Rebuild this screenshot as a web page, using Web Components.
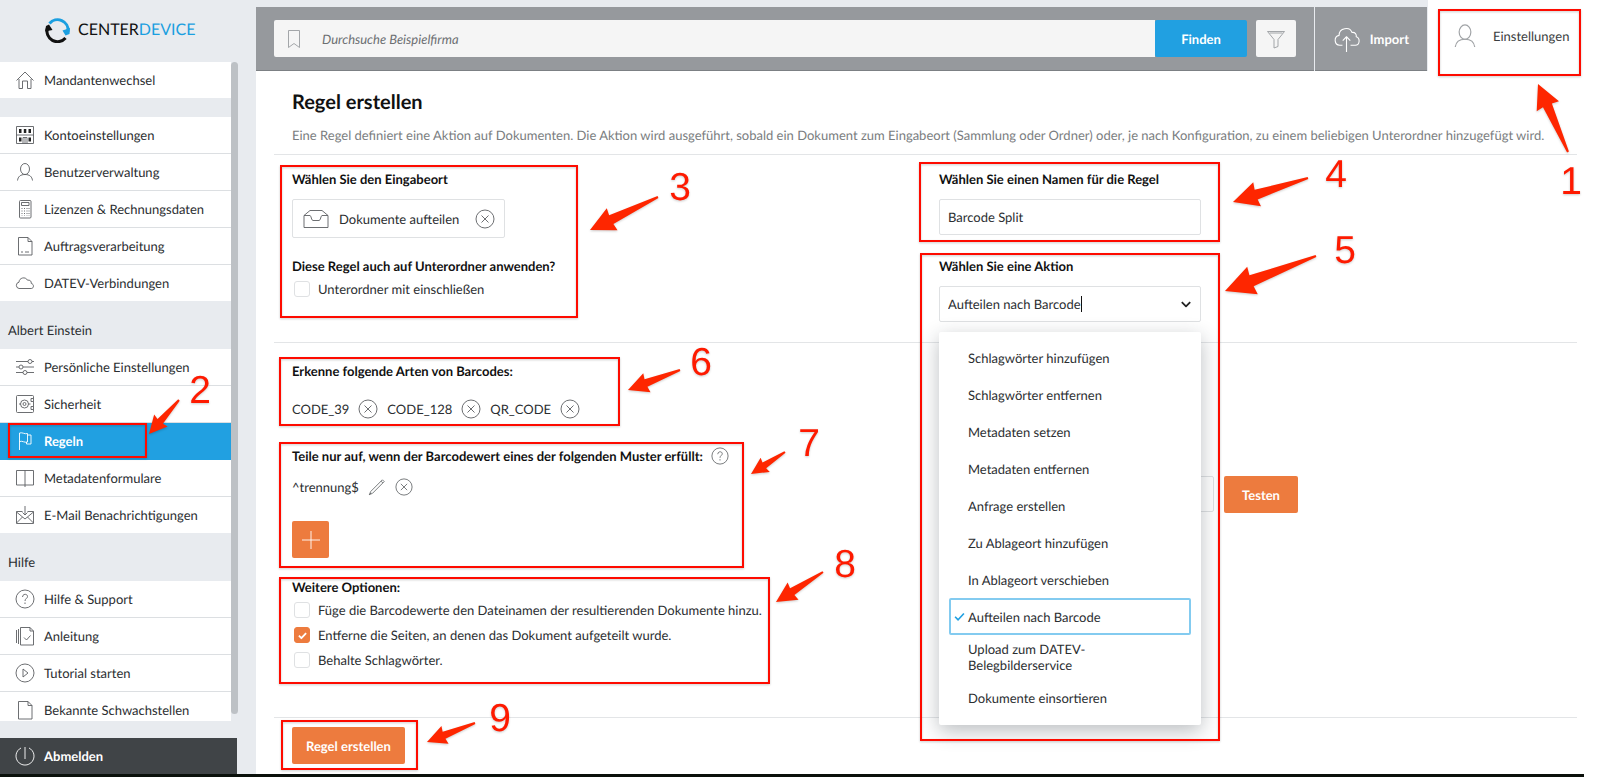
<!DOCTYPE html>
<html lang="de">
<head>
<meta charset="utf-8">
<title>CenterDevice - Regel erstellen</title>
<style>
  body {
    margin: 0;
    background: #fff;
    color: #2b2e31;
    font: 13px/20px Lato, "Liberation Sans", sans-serif;
    text-rendering: geometricPrecision;
  }
</style>
</head>
<body>
<cd-app></cd-app>

<script>
// small helper, every element below renders once into its shadow root
function render(host, html) {
  host.attachShadow({ mode: 'open' }).innerHTML = html;
}

const ICONS = {
  home: '<path d="M1.500 10.500 10 2l8.500 8.500M4 9v9.500h3.500V11h5v7.500H16V9"/>',
  building: '<path d="M1.500 1.500h17v17h-17zM1.500 10h17M8 18.500V12.500h4v6M10 12.500v6"/><path d="M4 4h2.500v4H4zM8.800 4h2.500v4H8.800zM13.500 4H16v4h-2.500zM4 12.500h2.500v4H4zM13.500 12.500H16v4h-2.500z" fill="#222" stroke="none"/>',
  user: '<ellipse cx="10" cy="7" rx="4.500" ry="5.500"/><path d="M2.500 18.500c.5-4 3-6 7.500-6s7 2 7.500 6"/>',
  calculator: '<rect x="4.500" y="1.500" width="11.500" height="17.500" rx="1"/><path d="M6.500 3.500H14v3H6.500z"/><path d="M7 9v8M9.500 9v8M12 9v8M14 9v8" stroke-dasharray="1 1.500"/>',
  contract: '<path d="M3.500 1.500H13l4 4v13.500H3.500zM13 1.500v4h4M6 16h2M10 16h4"/>',
  cloud: '<path d="M4 15.500a3.200 3.200 0 0 1 0-6.300c0-4.500 6.500-6 8.500-2 2.500-.5 4 1 3.800 3.300 3 .5 2.700 5 0 5z"/>',
  sliders: '<path d="M1 4.500h12M17 4.500h2M1 10h3M8 10h11M1 15.500h7M12 15.500h7"/><circle cx="15" cy="4.500" r="2"/><circle cx="6" cy="10" r="2"/><circle cx="10" cy="15.500" r="2"/>',
  safe: '<rect x="1.500" y="1.500" width="17" height="17" rx="1"/><circle cx="9.500" cy="10" r="4"/><circle cx="9.500" cy="10" r="1.500"/><path d="M4 10h1.500M13.500 10h2M18 4.500h-2v3h2M18 12.500h-2v3h2"/>',
  flag: '<path d="M4.500 19V2c3-1 5 1.500 8 .5v8.500c-3 1-5-1.500-8-.5M12.500 4H16v9h-4.500v-2"/>',
  book: '<path d="M1.500 2.500h17v14.500h-17zM10 2.500V19"/>',
  mail: '<path d="M7.500 6.500h-6v12h17v-12h-6M1.500 7l8.500 7 8.500-7M1.500 18l6-6M18.500 18l-6-6M10 1v9M7.500 7.500l2.500 2.500 2.500-2.500"/>',
  help: '<circle cx="10" cy="10" r="9"/><path d="M7.500 8c0-3.500 5-3.500 5-.5 0 2-2.500 2-2.500 4.500M10 13.500v1.500"/>',
  manual: '<path d="M5.500 1.500H15l3.500 3.500v14h-13zM15 1.500V5h3.500M3.500 3v15M1.500 4v13M9 11.500l2.500 2.500 4-4.500"/>',
  play: '<circle cx="10" cy="10" r="9"/><path d="M8 6l5 4-5 4z"/>',
  file: '<path d="M3.500 1.500H13l4 4v13.500H3.500zM13 1.500v4h4"/>',
  power: '<path d="M6 2a9 9 0 1 0 8 0M10 1v12"/>',
  close: '<circle cx="10" cy="10" r="9"/><path d="M6.500 6.500l7 7M13.500 6.500l-7 7"/>',
  pencil: '<path d="M1.500 18.500l1.500-3.500L16 2l2 2L5 17zM14.500 3.500l2 2M1.500 18.500l2-2"/>',
  inbox: '<path d="M-2 6.500 4 1.500h12l6 5V18.500H-2zM-2 6.500h6c1.500 0 1 5 3 5h6c2 0 1.500-5 3-5h6"/>',
  bookmark: '<path d="M4.500 1.500h11v17L10 14.500l-5.500 4z"/>',
  filter: '<path d="M1.500 2.500h17l-6.500 8v7l-4 1.500v-8.500zM3.500 4h13"/>',
  upload: '<path d="M7 15H5a3.700 3.700 0 0 1-.5-7.300C4.500 2 12.500 1 14 5.500c2.500-.3 3.600 1.500 3.200 3.200 3.200 1 2.700 6.300-.7 6.300H13M10 20V9M7.200 11.500 10 8.700l2.800 2.800"/>',
  plus: '<path d="M10 1v18M1 10h18"/>',
  chevron: '<path d="M3 7l7 7 7-7"/>',
  check: '<path d="M2 10.500l5.500 5.500L18 4.500"/>'
};

class CdIcon extends HTMLElement {
  connectedCallback() {
    render(this, `
      <style>
        :host { display: inline-flex; flex: none; width: 20px; height: 20px; color: #5c5f62; }
        svg {
          width: 100%; height: 100%; overflow: visible;
          fill: none; stroke: currentColor; stroke-width: var(--stroke, .9); stroke-linejoin: round;
        }
      </style>
      <svg viewBox="0 0 20 20" aria-hidden="true">${ICONS[this.getAttribute('name')]}</svg>
    `);
  }
}

class CdButton extends HTMLElement {
  connectedCallback() {
    render(this, `
      <style>
        :host { display: inline-flex; }
        button {
          min-width: 37px; height: 37px; padding: 0 var(--pad, 14px);
          display: flex; align-items: center; justify-content: center;
          border: 0; border-radius: 2px;
          background: var(--button-color, #ed7b3e); color: #fff;
          font: bold 13px/20px Lato, sans-serif; text-rendering: inherit;
        }
      </style>
      <button type="button" aria-label="${this.getAttribute('label') || this.textContent}"><slot></slot></button>
    `);
  }
}

// round x, also used for edit and help
class CdIconButton extends HTMLElement {
  connectedCallback() {
    render(this, `
      <style>
        :host { display: inline-flex; align-items: center; }
        button { display: flex; padding: 0; border: 0; background: none; }
        cd-icon { width: var(--size, 20px); height: var(--size, 20px); }
      </style>
      <button type="button" aria-label="${this.getAttribute('label')}">
        <cd-icon name="${this.getAttribute('icon')}"></cd-icon>
      </button>
    `);
  }
}

class CdCheckbox extends HTMLElement {
  connectedCallback() {
    render(this, `
      <style>
        :host { display: block; }
        label { display: flex; align-items: center; gap: 8px; padding-left: 2px; }
        input {
          appearance: none; box-sizing: border-box; width: 16px; height: 16px; margin: 0;
          border: 1px solid #dfe1e3; border-radius: 3px; background: #fff;
        }
        .box { display: grid; }
        .box > * { grid-area: 1 / 1; place-self: center; }
        cd-icon { width: 9px; height: 9px; color: #fff; --stroke: 4; visibility: hidden; }
        input:checked { background: #ed7b3e; border-color: #ed7b3e; }
        input:checked + cd-icon { visibility: visible; }
      </style>
      <label>
        <span class="box">
          <input type="checkbox" ${this.hasAttribute('checked') ? 'checked' : ''}>
          <cd-icon name="check"></cd-icon>
        </span>
        <slot></slot>
      </label>
    `);
  }
}

class CdLogo extends HTMLElement {
  connectedCallback() {
    render(this, `
      <style>
        :host { display: flex; align-items: center; gap: 8px; font-size: 16px; color: #111; }
        svg { width: 25px; height: 26px; fill: none; stroke-width: 3; }
        b { font-weight: normal; color: #1b9fe0; }
      </style>
      <svg viewBox="0 0 25 26" aria-hidden="true">
        <path d="M4.500 6.500a10.500 10.500 0 0 1 18.500 8" stroke="#1b9fe0"/>
        <path d="M17.500 13.500 25 11l-.5 6-4 1.500z" fill="#1b9fe0"/>
        <path d="M2.500 11a10.500 10.500 0 0 0 18 10" stroke="#111"/>
        <path d="M0 14.500 1 9l3-1.500L7.500 13z" fill="#111"/>
      </svg>
      <span>CENTER<b>DEVICE</b></span>
    `);
  }
}

class CdNavItem extends HTMLElement {
  connectedCallback() {
    render(this, `
      <style>
        :host { display: block; flex: none; background: #fff; border-bottom: 1px solid #dcdfe2; }
        :host(:last-of-type) { border-bottom: 0; }
        :host([active]) { background: #21a0e1; border-color: #21a0e1; font-weight: bold; }
        :host([dark]) { background: #404447; font-weight: bold; }
        a {
          display: flex; align-items: center; gap: 9px; height: 36px; padding-left: 15px;
          color: #2b2e31; text-decoration: none; white-space: nowrap;
        }
        :host([active]) a, :host([dark]) a, :host([active]) cd-icon, :host([dark]) cd-icon { color: #fff; }
      </style>
      <a href="#"><cd-icon name="${this.getAttribute('icon')}"></cd-icon><slot></slot></a>
    `);
  }
}

class CdSidebar extends HTMLElement {
  connectedCallback() {
    render(this, `
      <style>
        :host {
          display: flex; flex-direction: column; flex: none; box-sizing: border-box;
          width: 256px; background: #e8ebef;
        }
        cd-logo { height: 26px; padding: 17px 0 19px 45px; }
        .scroll { display: flex; flex: 1; min-height: 0; width: 238px; }
        nav { flex: 1; overflow: hidden; }
        .group { margin-bottom: 19px; }
        .bar { width: 7px; margin-bottom: 7px; border-radius: 4px; background: #bdc1c5; }
        h2 { margin: -19px 0 0; padding: 19px 0 9px 8px; font-size: 13px; font-weight: normal; line-height: 20px; }
        .logout { width: 237px; margin-top: 17px; }
      </style>
      <cd-logo></cd-logo>
      <div class="scroll">
        <nav>
          <div class="group">
            <cd-nav-item icon="home">Mandantenwechsel</cd-nav-item>
          </div>
          <div class="group">
            <cd-nav-item icon="building">Kontoeinstellungen</cd-nav-item>
            <cd-nav-item icon="user">Benutzerverwaltung</cd-nav-item>
            <cd-nav-item icon="calculator">Lizenzen &amp; Rechnungsdaten</cd-nav-item>
            <cd-nav-item icon="contract">Auftragsverarbeitung</cd-nav-item>
            <cd-nav-item icon="cloud">DATEV-Verbindungen</cd-nav-item>
          </div>
          <h2>Albert Einstein</h2>
          <div class="group">
            <cd-nav-item icon="sliders">Persönliche Einstellungen</cd-nav-item>
            <cd-nav-item icon="safe">Sicherheit</cd-nav-item>
            <cd-nav-item icon="flag" active>Regeln</cd-nav-item>
            <cd-nav-item icon="book">Metadatenformulare</cd-nav-item>
            <cd-nav-item icon="mail">E-Mail Benachrichtigungen</cd-nav-item>
          </div>
          <h2>Hilfe</h2>
          <div class="group">
            <cd-nav-item icon="help">Hilfe &amp; Support</cd-nav-item>
            <cd-nav-item icon="manual">Anleitung</cd-nav-item>
            <cd-nav-item icon="play">Tutorial starten</cd-nav-item>
            <cd-nav-item icon="file">Bekannte Schwachstellen</cd-nav-item>
          </div>
        </nav>
        <div class="bar"></div>
      </div>
      <cd-nav-item class="logout" icon="power" dark>Abmelden</cd-nav-item>
    `);
  }
}

class CdTopbar extends HTMLElement {
  connectedCallback() {
    render(this, `
      <style>
        :host { display: flex; }
        .bar { display: flex; flex: 1; gap: 1px; padding-top: 7px; background: #e8ebef; }
        .search, .import { display: flex; align-items: center; height: 63px; background: #96999d; border-bottom: 1px solid #7c8084; }
        .search { flex: 1; padding: 0 18px; }
        .field {
          display: flex; align-items: center; flex: 1; gap: 18px; height: 37px; padding-left: 10px;
          background: #f5f5f5; border-radius: 2px 0 0 2px;
        }
        .field cd-icon { color: #9a9da0; }
        input {
          flex: 1; border: 0; padding: 0; background: none; outline: 0;
          font: italic 13px/20px Lato, sans-serif; text-rendering: inherit;
        }
        input::placeholder { color: #6c6f72; opacity: 1; }
        cd-button { --button-color: #21a0e1; --pad: 26px; }
        .filter {
          display: flex; align-items: center; justify-content: center; width: 40px; height: 37px; margin-left: 9px;
          padding: 0; border: 0; border-radius: 2px; background: #f5f5f5;
        }
        .filter cd-icon { color: #9a9da0; }
        .import {
          box-sizing: content-box; gap: 10px; padding: 0 18px; margin-right: 1px;
          color: #fff; font-weight: bold; text-decoration: none;
        }
        .import cd-icon { width: 27px; height: 27px; color: #fff; --stroke: .8; }
        .user {
          display: flex; align-items: center; gap: 15px; width: 148px; height: 71px; padding-left: 24px;
          color: #3a3d40; text-decoration: none;
        }
        .user cd-icon { width: 26px; height: 26px; color: #a0a3a6; }
      </style>
      <div class="bar">
        <div class="search">
          <div class="field">
            <cd-icon name="bookmark"></cd-icon>
            <input type="text" aria-label="Suche" placeholder="Durchsuche Beispielfirma">
          </div>
          <cd-button>Finden</cd-button>
          <button class="filter" type="button" aria-label="Filter"><cd-icon name="filter"></cd-icon></button>
        </div>
        <a class="import" href="#"><cd-icon name="upload"></cd-icon>Import</a>
      </div>
      <a class="user" href="#"><cd-icon name="user"></cd-icon>Einstellungen</a>
    `);
  }
}

class CdActionSelect extends HTMLElement {
  connectedCallback() {
    const actions = [
      'Schlagwörter hinzufügen', 'Schlagwörter entfernen', 'Metadaten setzen', 'Metadaten entfernen',
      'Anfrage erstellen', 'Zu Ablageort hinzufügen', 'In Ablageort verschieben', 'Aufteilen nach Barcode',
      'Upload zum DATEV-Belegbilderservice', 'Dokumente einsortieren'
    ];
    const selected = 'Aufteilen nach Barcode';

    render(this, `
      <style>
        :host { display: block; }
        label { display: block; margin-bottom: 10px; font-weight: bold; color: #111; }
        .combo {
          position: relative; box-sizing: border-box; display: flex; align-items: center; width: 262px; height: 36px;
          padding: 0 8px; border: 1px solid #dfe1e3; border-radius: 2px;
        }
        input {
          field-sizing: content; border: 0; padding: 0; background: none; outline: 0;
          color: inherit; font: inherit; text-rendering: inherit;
        }
        .caret { width: 1px; height: 16px; background: #111; }
        .combo > cd-icon { width: 12px; height: 12px; margin-left: auto; color: #222; --stroke: 3; }
        ul {
          position: absolute; z-index: 2; top: 45px; left: -1px; right: -1px; margin: 0; padding: 7px 10px 9px; list-style: none;
          background: #fff; border-radius: 2px; box-shadow: 0 6px 20px rgba(30, 40, 50, .3);
        }
        li {
          box-sizing: border-box; display: flex; align-items: center; min-height: 37px; padding: 6px 50px 6px 19px;
          line-height: 16px;
        }
        li[aria-selected=true] { padding-left: 3px; padding-right: 0; gap: 3px; border: 2px solid #83cbf0; border-radius: 2px; }
        li cd-icon { width: 11px; height: 11px; color: #21a0e1; --stroke: 3; }
      </style>
      <label for="action">Wählen Sie eine Aktion</label>
      <div class="combo">
        <input id="action" type="text" role="combobox" aria-expanded="true" aria-controls="list" value="${selected}">
        <span class="caret"></span>
        <cd-icon name="chevron"></cd-icon>
        <ul id="list" role="listbox">
          ${actions.map(a => a === selected
            ? `<li role="option" aria-selected="true"><cd-icon name="check"></cd-icon>${a}</li>`
            : `<li role="option">${a}</li>`).join('')}
        </ul>
      </div>
    `);
  }
}

class CdRuleForm extends HTMLElement {
  connectedCallback() {
    render(this, `
      <style>
        :host { display: flex; flex-direction: column; flex: 1; }
        h1 { margin: 0 0 11px; font-size: 20px; line-height: 24px; color: #111; }
        h3, .name label { display: block; margin: 0; font-size: 13px; line-height: 20px; font-weight: bold; color: #111; }
        .intro { padding: 19px 36px 9px; color: #7a7d80; }
        .intro p { margin: 0; }
        section { display: grid; grid-template-columns: 1fr 1fr; padding: 14px 14px 20px 36px; }
        section.options { padding: 18px 14px 47px 36px; }
        hr { width: auto; margin: 0 23px 0 18px; border: 0; border-top: 1px solid #e3e5e7; }
        .source {
          box-sizing: border-box; display: flex; align-items: center; width: 213px; height: 39px; margin: 10px 0 18px;
          padding: 0 9px 0 10px; border: 1px solid #dfe1e3; border-radius: 2px;
        }
        .source cd-icon { width: 26px; margin-right: 10px; }
        .source cd-icon-button { margin-left: auto; }
        .name input, .test input {
          box-sizing: border-box; height: 36px; padding: 0 8px; border: 1px solid #dfe1e3; border-radius: 2px;
          background: #fff; color: inherit; font: inherit; text-rendering: inherit;
        }
        .name input { display: block; width: 262px; margin: 10px 0 21px; }
        cd-checkbox { margin-top: 3px; }
        cd-checkbox + cd-checkbox { margin-top: 5px; }
        .codes { display: flex; gap: 9px; margin: 18px 0 27px; }
        .pattern { display: flex; gap: 9px; margin: 11px 0 24px; }
        .pattern, .title { --size: 18px; }
        .title { display: flex; gap: 8px; }
        .add { --pad: 8px; margin-bottom: 19px; }
        .add cd-icon { color: #fff; }
        .test { display: flex; gap: 10px; align-self: start; margin-top: 115px; }
        .test input { width: 275px; }
        .test cd-button { --pad: 18px; }
        .submit { padding: 9px 36px; }
      </style>
      <div class="intro">
        <h1>Regel erstellen</h1>
        <p>Eine Regel definiert eine Aktion auf Dokumenten. Die Aktion wird ausgeführt, sobald ein Dokument zum Eingabeort (Sammlung oder Ordner) oder, je nach Konfiguration, zu einem beliebigen Unterordner hinzugefügt wird.</p>
      </div>
      <hr>
      <section>
        <div>
          <h3>Wählen Sie den Eingabeort</h3>
          <div class="source">
            <cd-icon name="inbox"></cd-icon>Dokumente aufteilen
            <cd-icon-button icon="close" label="Entfernen"></cd-icon-button>
          </div>
          <h3>Diese Regel auch auf Unterordner anwenden?</h3>
          <cd-checkbox>Unterordner mit einschließen</cd-checkbox>
        </div>
        <div class="name">
          <label for="name">Wählen Sie einen Namen für die Regel</label>
          <input id="name" type="text" value="Barcode Split">
          <cd-action-select></cd-action-select>
        </div>
      </section>
      <hr>
      <section class="options">
        <div>
          <h3>Erkenne folgende Arten von Barcodes:</h3>
          <div class="codes">
            <span>CODE_39</span><cd-icon-button icon="close" label="Entfernen"></cd-icon-button>
            <span>CODE_128</span><cd-icon-button icon="close" label="Entfernen"></cd-icon-button>
            <span>QR_CODE</span><cd-icon-button icon="close" label="Entfernen"></cd-icon-button>
          </div>
          <div class="title">
            <h3>Teile nur auf, wenn der Barcodewert eines der folgenden Muster erfüllt:</h3>
            <cd-icon-button icon="help" label="Info"></cd-icon-button>
          </div>
          <div class="pattern">
            <span>^trennung$</span>
            <cd-icon-button icon="pencil" label="Bearbeiten"></cd-icon-button>
            <cd-icon-button icon="close" label="Entfernen"></cd-icon-button>
          </div>
          <cd-button class="add" label="Muster anlegen"><cd-icon name="plus"></cd-icon></cd-button>
          <h3>Weitere Optionen:</h3>
          <cd-checkbox>Füge die Barcodewerte den Dateinamen der resultierenden Dokumente hinzu.</cd-checkbox>
          <cd-checkbox checked>Entferne die Seiten, an denen das Dokument aufgeteilt wurde.</cd-checkbox>
          <cd-checkbox>Behalte Schlagwörter.</cd-checkbox>
        </div>
        <div class="test">
          <input type="text" aria-label="Testwert">
          <cd-button>Testen</cd-button>
        </div>
      </section>
      <hr>
      <div class="submit"><cd-button>Regel erstellen</cd-button></div>
    `);
  }
}

// numbered red marks over the page: box [x, y, w, h], arrow [tip, tail], label [x, baseline]
class CdCallouts extends HTMLElement {
  connectedCallback() {
    const marks = [
      { box: [1439, 10, 141, 65], arrow: [1538, 84, 1568, 152], at: [1571, 194] },
      { box: [9, 424, 137, 33], arrow: [149, 434, 179, 400], at: [200, 403] },
      { box: [281, 166, 296, 151], arrow: [590, 230, 658, 197], at: [680, 200] },
      { box: [920, 163, 299, 78], arrow: [1233, 202, 1308, 178], at: [1336, 187] },
      { box: [921, 254, 298, 486], arrow: [1225, 291, 1316, 256], at: [1345, 263] },
      { box: [280, 358, 339, 67], arrow: [628, 390, 680, 370], at: [701, 375] },
      { box: [280, 443, 463, 124], arrow: [751, 474, 785, 452], at: [809, 456] },
      { box: [280, 578, 489, 105], arrow: [776, 602, 823, 572], at: [845, 577] },
      { box: [282, 721, 135, 48], arrow: [427, 742, 475, 723], at: [500, 731] }
    ];

    render(this, `
      <style>
        :host { position: absolute; z-index: 5; top: 0; left: 0; pointer-events: none; }
        svg { display: block; filter: drop-shadow(0 1px 1px rgba(0, 0, 0, .2)); }
        rect { fill: none; stroke: #fe0b00; stroke-width: 2; }
        path { fill: #fe2600; }
        text { fill: #fe1a00; font: 39px "Liberation Sans", sans-serif; text-anchor: middle; }
      </style>
      <svg width="1600" height="777" viewBox="0 0 1600 777">
        ${marks.map((m, i) => this._mark(m, i + 1)).join('')}
      </svg>
    `);
  }

  _mark({ box, arrow, at }, number) {
    const [x, y, w, h] = box;
    return `
      <rect x="${x}" y="${y}" width="${w}" height="${h}"/>
      <path d="${this._arrow(arrow)}"/>
      <text x="${at[0]}" y="${at[1]}">${number}</text>`;
  }

  _arrow([x, y, tailX, tailY]) {
    const length = Math.hypot(tailX - x, tailY - y);
    const ux = (tailX - x) / length;
    const uy = (tailY - y) / length;
    const head = 8 + length * 0.22;
    const point = (along, side) => `${x + ux * along - uy * side} ${y + uy * along + ux * side}`;
    return 'M' + [
      point(0, 0), point(head, head / 2), point(head - 1, head / 5), point(length, 1),
      point(length, -1), point(head - 1, -head / 5), point(head, -head / 2)
    ].join('L') + 'Z';
  }
}

class CdApp extends HTMLElement {
  connectedCallback() {
    render(this, `
      <style>
        :host { display: flex; flex-direction: column; min-height: 100vh; position: relative; }
        .page { display: flex; flex: 1; }
        main { display: flex; flex-direction: column; flex: 1; min-width: 0; }
        /* the nav scrolls inside, it must not make the page taller */
        cd-sidebar { contain: size; }
        .desktop { height: 3px; margin-right: 16px; background: #0a100b; }
      </style>
      <div class="page">
        <cd-sidebar></cd-sidebar>
        <main>
          <cd-topbar></cd-topbar>
          <cd-rule-form></cd-rule-form>
        </main>
      </div>
      <div class="desktop"></div>
      <cd-callouts></cd-callouts>
    `);
  }
}

customElements.define('cd-icon', CdIcon);
customElements.define('cd-button', CdButton);
customElements.define('cd-icon-button', CdIconButton);
customElements.define('cd-checkbox', CdCheckbox);
customElements.define('cd-logo', CdLogo);
customElements.define('cd-nav-item', CdNavItem);
customElements.define('cd-sidebar', CdSidebar);
customElements.define('cd-topbar', CdTopbar);
customElements.define('cd-action-select', CdActionSelect);
customElements.define('cd-rule-form', CdRuleForm);
customElements.define('cd-callouts', CdCallouts);
customElements.define('cd-app', CdApp);
</script>
</body>
</html>
